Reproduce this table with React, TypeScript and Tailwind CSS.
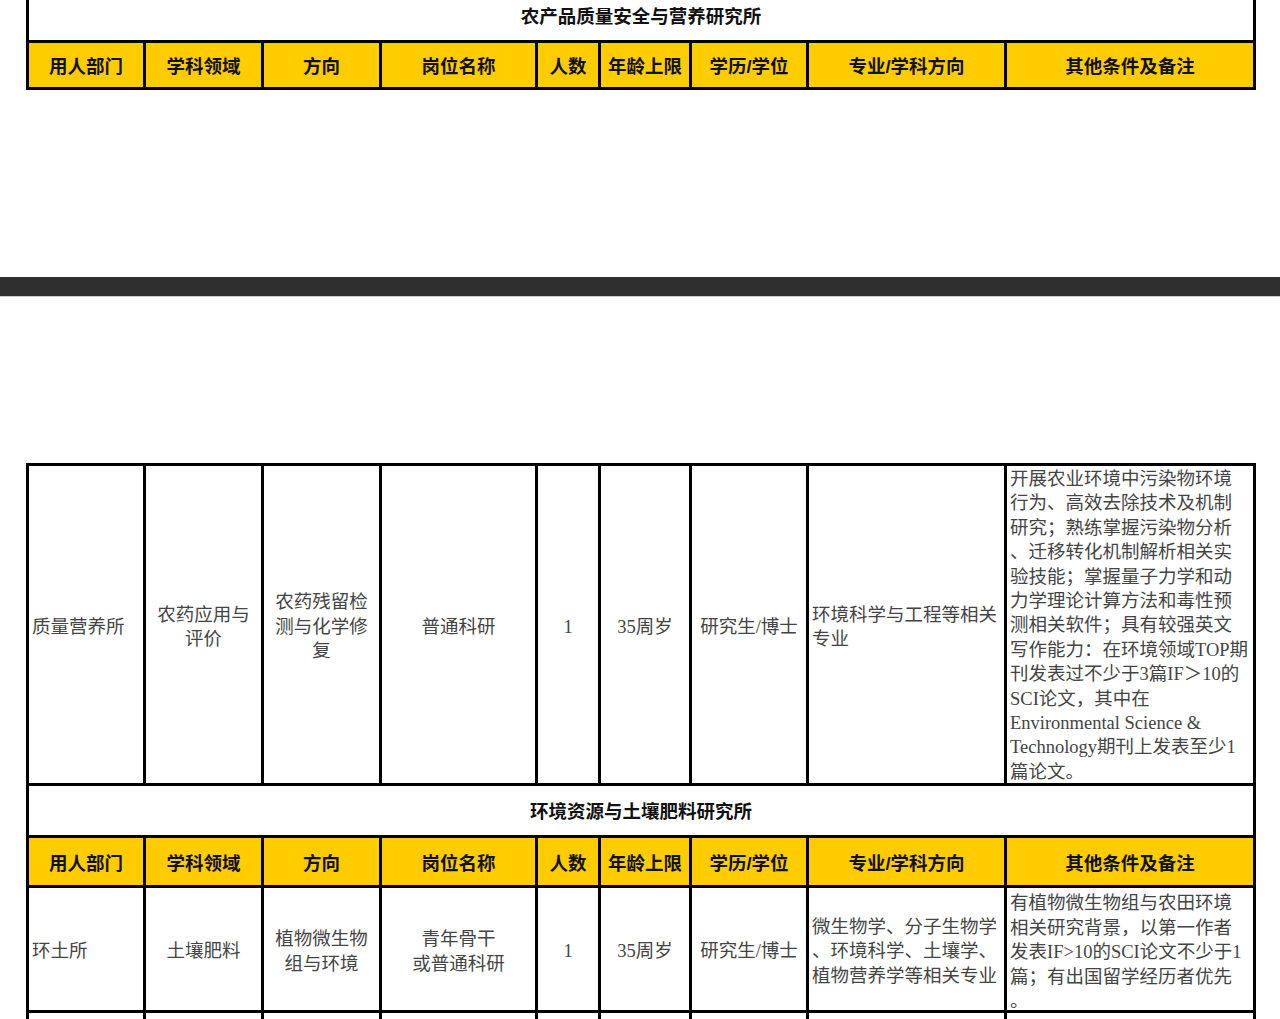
import React from 'react';

const headers = ['用人部门', '学科领域', '方向', '岗位名称', '人数', '年龄上限', '学历/学位', '专业/学科方向', '其他条件及备注'];

const bodyFont = "font-['Liberation_Serif','Noto_Sans_CJK_SC',serif] text-[18.5px] leading-[24.5px] text-[#444]";
const boldFont = "font-['Liberation_Sans','Noto_Sans_CJK_SC',sans-serif] text-[18.5px] font-bold text-[#111]";

const HeaderRow: React.FC = () => (
  <>
    {headers.map((h) => (
      <div key={h} className={`bg-[#ffcc00] flex items-center justify-center whitespace-nowrap pt-[4px] ${boldFont}`}>
        {h}
      </div>
    ))}
  </>
);

const Cell: React.FC<{ children?: React.ReactNode; align?: 'center' | 'left' | 'top' }> = ({ children, align = 'center' }) => {
  if (align === 'top') {
    return <div className={`bg-white overflow-hidden pl-[3px] pt-[1px] ${bodyFont}`}>{children}</div>;
  }
  if (align === 'left') {
    return <div className={`bg-white overflow-hidden flex flex-col justify-center pl-[3px] pt-[5px] ${bodyFont}`}>{children}</div>;
  }
  return (
    <div className={`bg-white overflow-hidden flex flex-col items-center justify-center text-center pt-[5px] ${bodyFont}`}>
      {children}
    </div>
  );
};

const Lines: React.FC<{ lines: string[] }> = ({ lines }) => (
  <>
    {lines.map((l, i) => (
      <div key={i} className="whitespace-nowrap">
        {l}
      </div>
    ))}
  </>
);

export default function App() {
  return (
    <div className="w-full h-[1019px] overflow-hidden bg-white">
      {/* first table, top of it cut off */}
      <div className="ml-[26px] w-[1230px] grid grid-cols-[114px_115px_115px_153px_60px_88px_114px_195px_246px] grid-rows-[40px_44px] gap-[3px] bg-black px-[3px] pb-[3px]">
        <div className={`col-span-9 bg-white flex items-center justify-center pb-[6px] ${boldFont}`}>
          农产品质量安全与营养研究所
        </div>
        <HeaderRow />
      </div>

      {/* divider between pictures */}
      <div className="mt-[187px] h-[19px] bg-[#2f2f2f]" />
      <div className="h-px bg-[#c8c8c8]" />

      {/* second table */}
      <div className="mt-[166px] ml-[26px] w-[1230px] grid grid-cols-[114px_115px_115px_153px_60px_88px_114px_195px_246px] grid-rows-[317px_49px_47px_122px_60px] gap-[3px] bg-black p-[3px]">
        <Cell align="left">质量营养所</Cell>
        <Cell>
          <Lines lines={['农药应用与', '评价']} />
        </Cell>
        <Cell>
          <Lines lines={['农药残留检', '测与化学修', '复']} />
        </Cell>
        <Cell>普通科研</Cell>
        <Cell>1</Cell>
        <Cell>35周岁</Cell>
        <Cell>研究生/博士</Cell>
        <Cell align="left">
          <Lines lines={['环境科学与工程等相关', '专业']} />
        </Cell>
        <Cell align="top">
          <div className="leading-[24.4px]">
            <Lines
              lines={[
                '开展农业环境中污染物环境',
                '行为、高效去除技术及机制',
                '研究；熟练掌握污染物分析',
                '、迁移转化机制解析相关实',
                '验技能；掌握量子力学和动',
                '力学理论计算方法和毒性预',
                '测相关软件；具有较强英文',
                '写作能力：在环境领域TOP期',
                '刊发表过不少于3篇IF＞10的',
                'SCI论文，其中在',
                'Environmental Science &',
                'Technology期刊上发表至少1',
                '篇论文。',
              ]}
            />
          </div>
        </Cell>

        <div className={`col-span-9 bg-white flex items-center justify-center pt-[3px] ${boldFont}`}>
          环境资源与土壤肥料研究所
        </div>
        <HeaderRow />

        <Cell align="left">环土所</Cell>
        <Cell>土壤肥料</Cell>
        <Cell>
          <Lines lines={['植物微生物', '组与环境']} />
        </Cell>
        <Cell>
          <Lines lines={['青年骨干', '或普通科研']} />
        </Cell>
        <Cell>1</Cell>
        <Cell>35周岁</Cell>
        <Cell>研究生/博士</Cell>
        <Cell align="left">
          <Lines lines={['微生物学、分子生物学', '、环境科学、土壤学、', '植物营养学等相关专业']} />
        </Cell>
        <Cell align="top">
          <div className="pt-[2px]">
            <Lines
              lines={[
                '有植物微生物组与农田环境',
                '相关研究背景，以第一作者',
                '发表IF>10的SCI论文不少于1',
                '篇；有出国留学经历者优先',
                '。',
              ]}
            />
          </div>
        </Cell>

        {headers.map((h) => (
          <div key={'e' + h} className="bg-white" />
        ))}
      </div>
    </div>
  );
}
